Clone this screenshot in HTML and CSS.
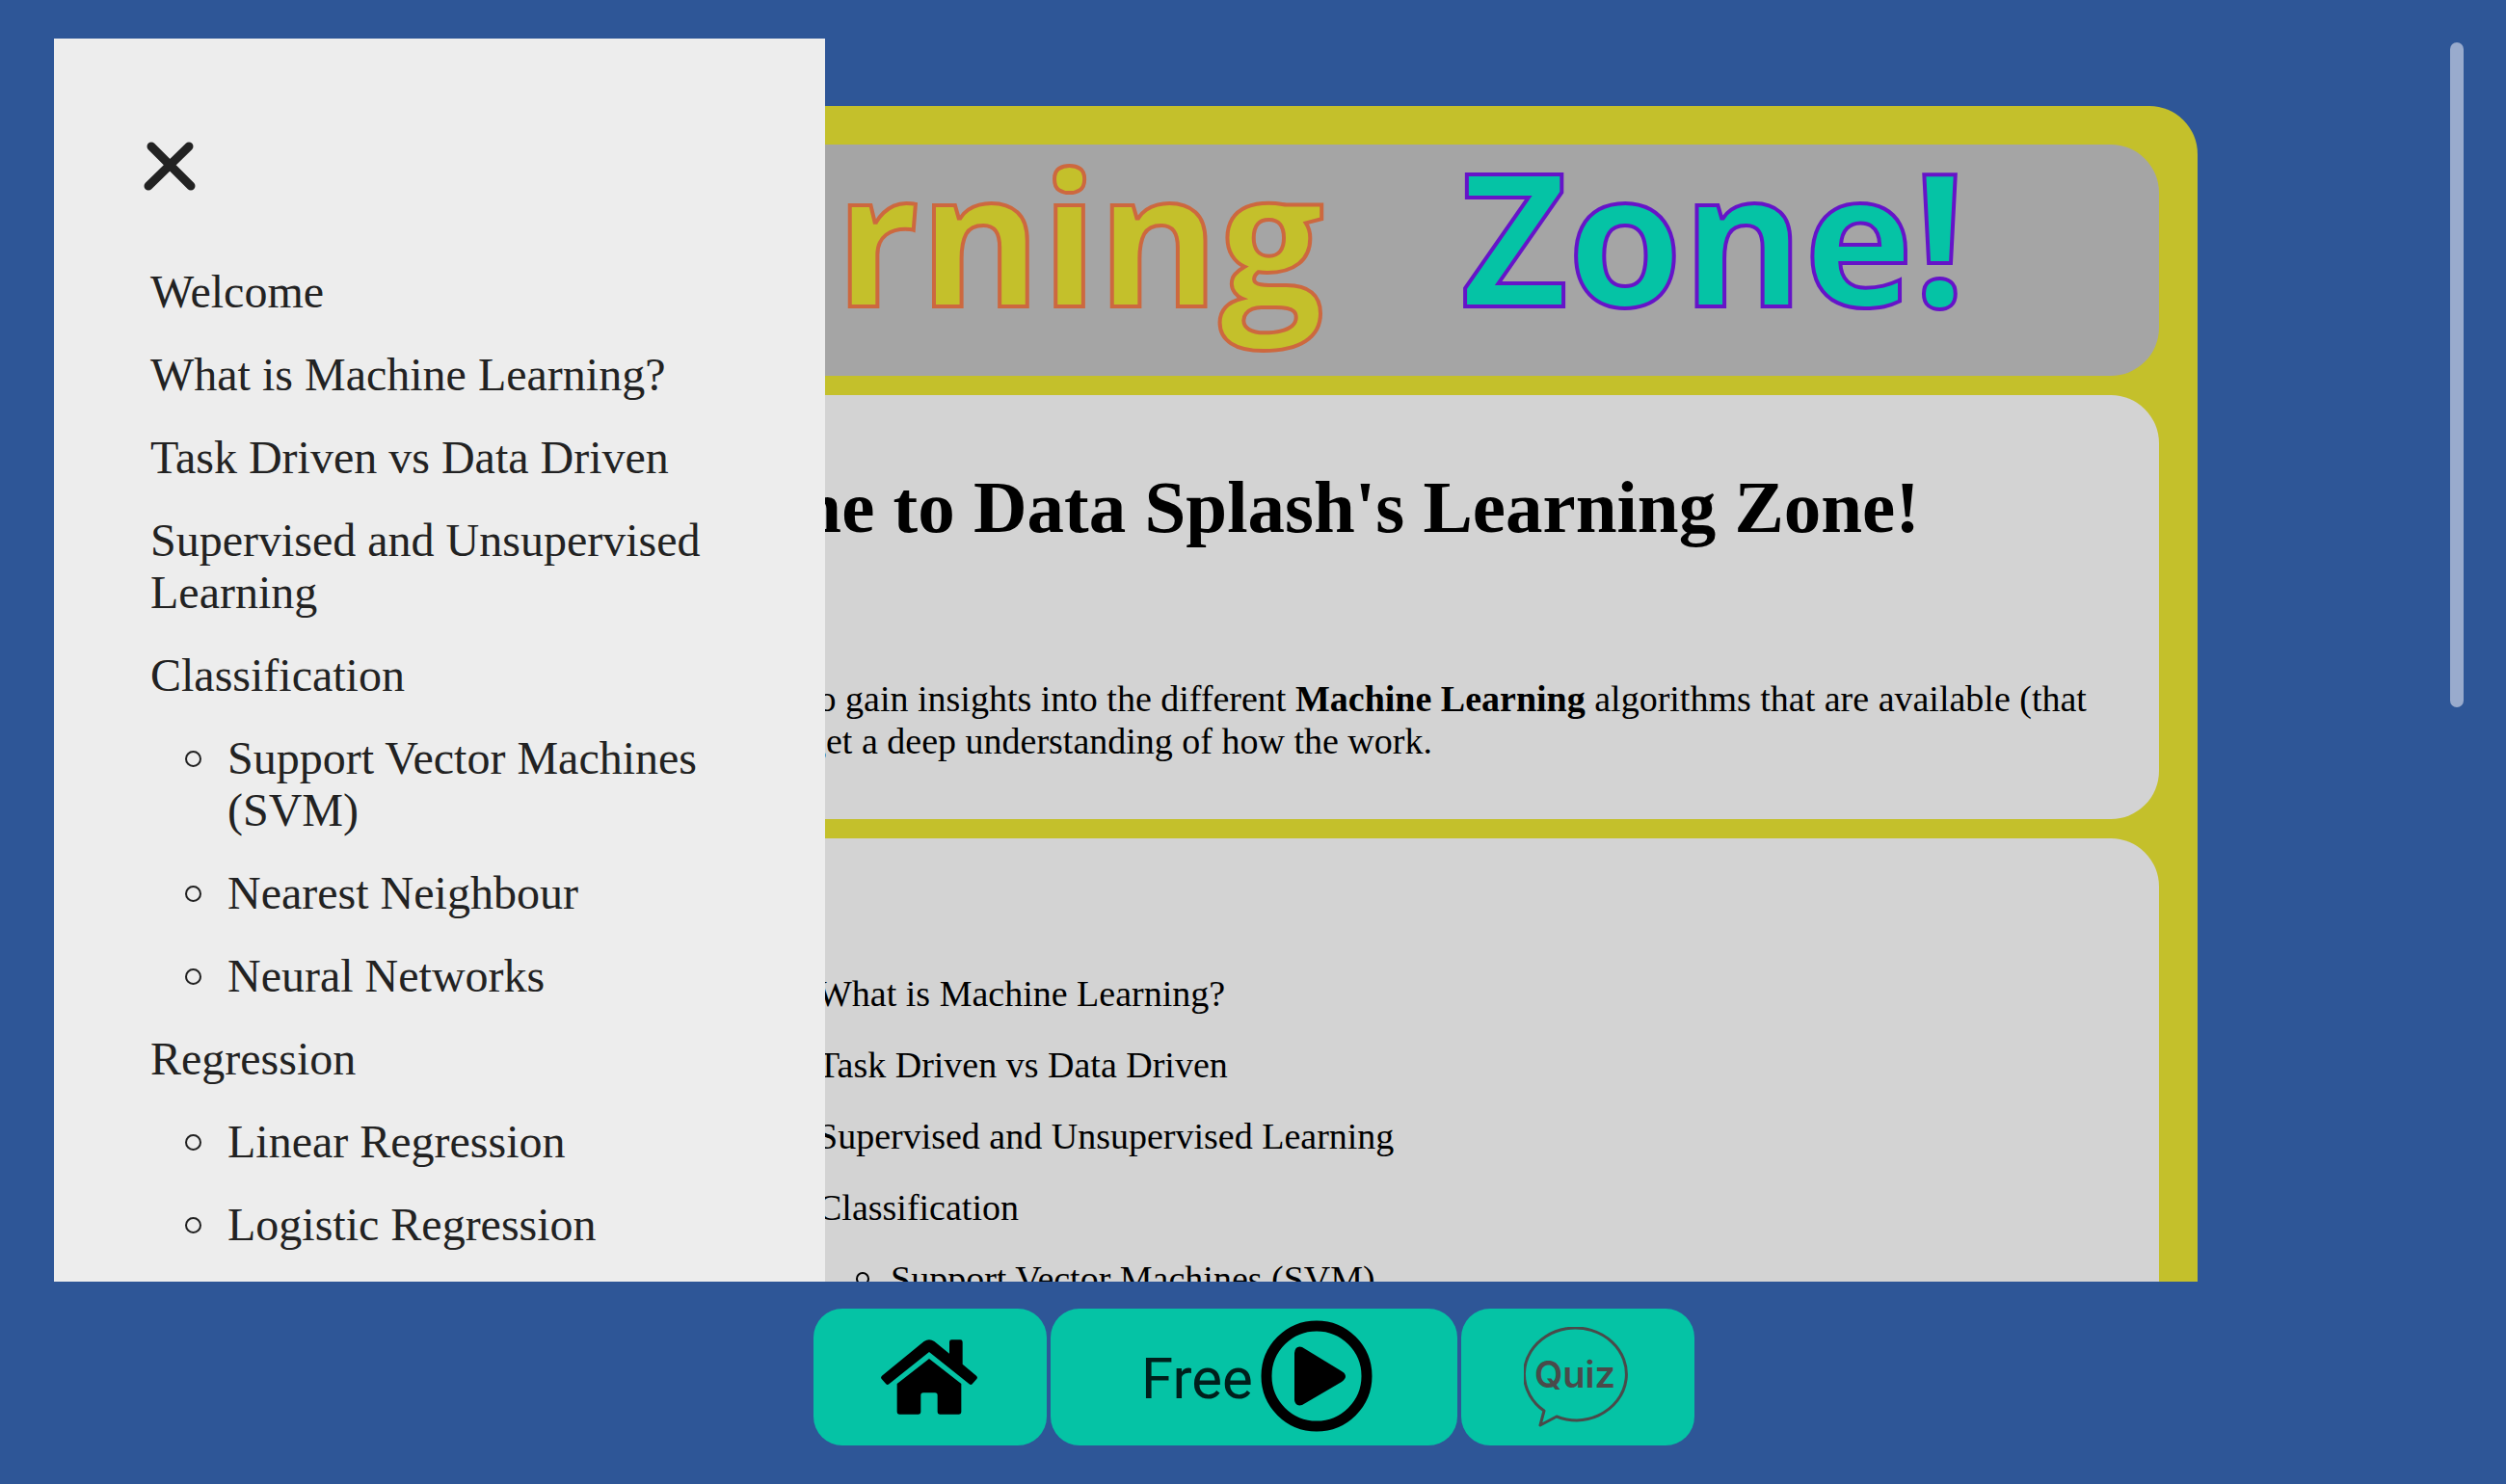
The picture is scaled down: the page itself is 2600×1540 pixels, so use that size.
FILE: index.html
```html
<!DOCTYPE html>
<html lang="en">
<head>
<meta charset="utf-8">
<title>Learning Zone</title>
<link rel="stylesheet" href="styles.css">
</head>
<body>
<div class="viewport">
  <main class="board">
    <header class="banner">
      <span class="word word-learning">Learning</span>
      <span class="word word-zone">Zone!</span>
    </header>
    <section class="card intro">
      <h1>Welcome to Data Splash's Learning Zone!</h1>
      <p>to gain insights into the different <b>Machine Learning</b> algorithms that are available (that<br>get a deep understanding of how the work.</p>
    </section>
    <section class="card contents">
      <ul class="topics">
        <li>What is Machine Learning?</li>
        <li>Task Driven vs Data Driven</li>
        <li>Supervised and Unsupervised Learning</li>
        <li>Classification
          <ul>
            <li>Support Vector Machines (SVM)</li>
            <li>Nearest Neighbour</li>
            <li>Neural Networks</li>
          </ul>
        </li>
      </ul>
    </section>
  </main>
  <aside class="menu">
    <button class="close" type="button" aria-label="Close menu">
      <svg viewBox="0 0 54 50" aria-hidden="true"><path d="M7 4 L48 45 M46 4 L4 45"/></svg>
    </button>
    <nav>
      <ul>
        <li><a href="#">Welcome</a></li>
        <li><a href="#">What is Machine Learning?</a></li>
        <li><a href="#">Task Driven vs Data Driven</a></li>
        <li><a href="#">Supervised and Unsupervised Learning</a></li>
        <li><a href="#">Classification</a>
          <ul>
            <li><a href="#">Support Vector Machines (SVM)</a></li>
            <li><a href="#">Nearest Neighbour</a></li>
            <li><a href="#">Neural Networks</a></li>
          </ul>
        </li>
        <li><a href="#">Regression</a>
          <ul>
            <li><a href="#">Linear Regression</a></li>
            <li><a href="#">Logistic Regression</a></li>
          </ul>
        </li>
      </ul>
    </nav>
  </aside>
  <div class="scroll-thumb"></div>
</div>
<footer class="toolbar">
  <button class="tool" type="button" aria-label="Home">
    <svg class="icon-home" viewBox="0 0 300 234" aria-hidden="true">
      <path d="M3 113 L134 6 Q150 -5 166 6 L213 44 V8 Q213 1 220 1 H247 Q254 1 254 8 V77 L297 113 Q302 118 298 123 L284 139 Q280 143 275 139 L150 39 L25 139 Q20 143 16 139 L2 123 Q-2 118 3 113 Z"/>
      <path d="M150 60 L250 138 V226 Q250 233 243 233 H183 Q176 233 176 226 V174 Q176 166 168 166 H132 Q124 166 124 174 V226 Q124 233 117 233 H57 Q50 233 50 226 V138 Z"/>
    </svg>
  </button>
  <button class="tool tool-wide" type="button">
    <span>Free</span>
    <svg class="icon-play" viewBox="0 0 116 116" aria-hidden="true">
      <circle cx="58" cy="58" r="52"/>
      <path d="M35 34 Q36 26 43 28 L84 53 Q92 58 84 64 L43 88 Q36 90 35 83 Z"/>
    </svg>
  </button>
  <button class="tool" type="button">
    <svg class="icon-quiz" viewBox="0 0 110 104" aria-hidden="true">
      <path d="M21 87 L17 102 L34 93 Q44 97 55 97 A53 48 0 1 0 21 87 Z"/>
      <text x="53" y="63" text-anchor="middle">Quiz</text>
    </svg>
  </button>
</footer>
</body>
</html>
```
FILE: styles.css
```css
*, *::before { box-sizing: border-box; }

body {
  margin: 0;
  height: 100vh;
  display: flex;
  flex-direction: column;
  background: #2e5697;
  color: #000;
  font-family: "Liberation Serif", "Times New Roman", serif;
  font-size: 38px;
  line-height: 44px;
  overflow: hidden;
}

.viewport {
  position: relative;
  flex: 1;
  min-height: 0;
  margin: 40px 42px 0 56px;
  overflow: hidden;
}

.board {
  margin: 70px 278px 0 264px;
  padding: 40px;
  border-radius: 50px;
  background: #c4c02b;
  display: flex;
  flex-direction: column;
  gap: 20px;
}

.banner {
  height: 240px;
  padding-right: 200px;
  border-radius: 50px;
  background: #a5a5a5;
  display: flex;
  justify-content: flex-end;
  gap: 142px;
  font-family: "Open Sans", sans-serif;
  font-weight: 700;
  font-size: 192px;
  line-height: 188px;
}

.word { -webkit-text-stroke: 4px; }
.word-learning { color: #c4c02b; -webkit-text-stroke-color: #cd683f; }
.word-zone { color: #05c3a5; -webkit-text-stroke-color: #6614c8; }

.card {
  border-radius: 50px;
  background: #d3d3d3;
}

.intro { height: 440px; padding: 72px 0 0; }

h1 {
  margin: 0 0 133px;
  font-size: 77px;
  line-height: 88px;
  text-align: center;
}

.intro p { margin: 0 0 0 478px; white-space: nowrap; }

.contents { padding: 139px 60px; }

ul { margin: 0; padding: 0; list-style: none; }
ul ul li::before {
  content: "";
  display: inline-block;
  border: 2px solid;
  border-radius: 50%;
}

.topics { padding: 0 0 0 428px; }
.topics ul { padding: 0 0 0 76px; }
.topics li { margin-bottom: 30px; }
.topics ul li:first-child { margin-top: 30px; }
.topics ul li::before {
  width: 14px;
  height: 14px;
  margin: 0 22px 0 -36px;
  vertical-align: 6px;
}

.menu {
  position: absolute;
  inset: 0 auto 0 0;
  width: 800px;
  padding: 108px 100px 0;
  background: #ededed;
  color: #222;
  overflow: hidden;
  font-size: 48px;
  line-height: 54px;
}

.close {
  display: block;
  margin: 0 0 78px -6px;
  padding: 0;
  border: 0;
  background: none;
}
.close svg { display: block; width: 54px; height: 50px; overflow: visible; }
.close path { fill: none; stroke: #222; stroke-width: 9; stroke-linecap: round; }

.menu ul ul { padding-left: 80px; }
.menu li { margin-bottom: 32px; }
.menu ul ul li:first-child { margin-top: 32px; }
.menu ul ul li::before {
  width: 17px;
  height: 17px;
  margin: 0 27px 0 -44px;
  vertical-align: 7px;
}
.menu a { color: inherit; text-decoration: none; }

.scroll-thumb {
  position: absolute;
  top: 4px;
  right: 2px;
  width: 14px;
  height: 690px;
  border-radius: 7px;
  background: #99abcd;
}

.toolbar {
  display: flex;
  justify-content: center;
  gap: 4px;
  padding: 28px 0 40px 2px;
}

.tool {
  width: 242px;
  height: 142px;
  padding: 0 2px 0 0;
  border: 0;
  border-radius: 30px;
  background: #05c3a5;
  display: flex;
  align-items: center;
  justify-content: center;
}
.tool-wide {
  width: 422px;
  padding: 0 0 2px 6px;
  gap: 8px;
  color: #001f1b;
  font-family: Roboto, sans-serif;
  font-size: 60px;
}
.tool-wide span { padding-top: 4px; }

.icon-home { width: 100px; height: 78px; }
.icon-play { width: 116px; height: 116px; }
.icon-play circle { fill: none; stroke: #000; stroke-width: 11; }
.icon-quiz { width: 110px; height: 104px; }
.icon-quiz path { fill: none; stroke: #4a4a4a; stroke-width: 3; stroke-linejoin: round; }
.icon-quiz text { fill: #4a4a4a; font: 600 38px Inter, sans-serif; }
```
